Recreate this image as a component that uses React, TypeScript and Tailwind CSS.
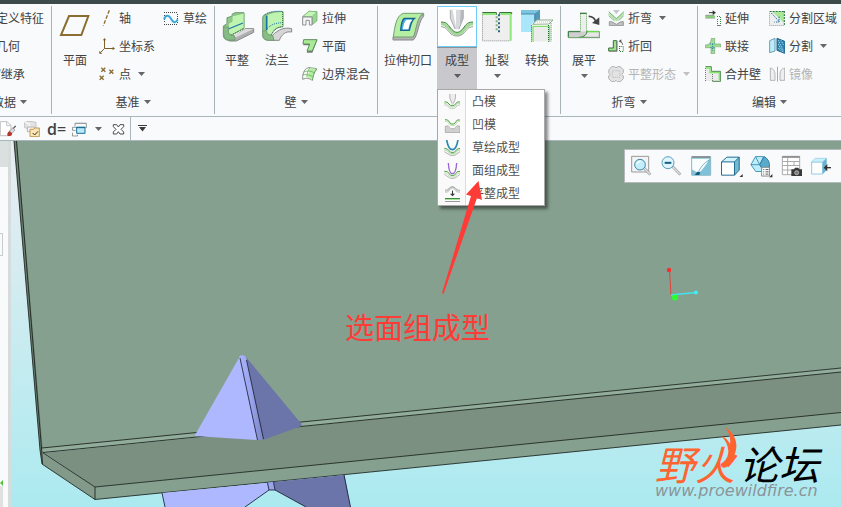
import type { ReactNode } from 'react';

type IconProps = { box: string; className?: string; children: ReactNode };

function Icon({ box, className = 'size-4', children }: IconProps) {
  return (
    <svg viewBox={box} className={`shrink-0 ${className}`} fill="none" strokeWidth={3} aria-hidden="true">
      {children}
    </svg>
  );
}

function Caret({ className = '' }: { className?: string }) {
  return (
    <svg viewBox="0 0 7 4" className={`h-1 w-[7px] shrink-0 fill-current ${className}`} aria-hidden="true">
      <path d="M0 0h7L3.5 4z" />
    </svg>
  );
}

type SmallProps = { icon?: ReactNode; label: string; caret?: boolean; disabled?: boolean };

function SmallButton({ icon, label, caret, disabled }: SmallProps) {
  return (
    <button disabled={disabled} className="flex h-7 items-center gap-1 whitespace-nowrap disabled:text-[#b4b4b4]">
      {icon}
      <span>{label}</span>
      {caret && <Caret className="ml-[3px] opacity-80" />}
    </button>
  );
}

type LargeProps = { icon: ReactNode; label: string; caret?: boolean; className?: string };

function LargeButton({ icon, label, caret, className = 'w-10' }: LargeProps) {
  return (
    <button className={`flex h-[84px] shrink-0 flex-col items-center whitespace-nowrap pt-1 ${className}`}>
      {icon}
      <span className="mt-2 leading-4">{label}</span>
      {caret && <Caret className="mt-1.5 opacity-80" />}
    </button>
  );
}

function Group({ title, className, children }: { title?: string; className: string; children: ReactNode }) {
  return (
    <section className={`flex flex-col ${className}`}>
      <div className="flex h-[84px] items-start">{children}</div>
      {title && (
        <button className="flex h-7 items-center justify-center gap-1 whitespace-nowrap">
          {title}
          <Caret className="opacity-80" />
        </button>
      )}
    </section>
  );
}

function Separator() {
  return <div className="my-0.5 w-px shrink-0 bg-[#a9b3b6]" />;
}

const planeIcon = (
  <Icon box="171 24 108 108" className="size-9">
    <path d="M207 48h58l-21 57h-61z" stroke="#8b6d31" strokeWidth={6} />
  </Icon>
);

const axisIcon = (
  <Icon box="297 30 48 48">
    <path d="M328 31l-18 46" stroke="#8b6d31" strokeWidth={4} strokeDasharray="11 5" />
  </Icon>
);

const csysIcon = (
  <Icon box="297 114 48 48">
    <path d="M313.5 118v27.5H341M313 146l-13 13" stroke="#7d5f28" strokeWidth={3} />
    <path d="M313.500 114l5 7h-10zM345 145.500l-7-5v10zM298 161v-9l9 9z" fill="#7d5f28" />
  </Icon>
);

const pointIcon = (
  <Icon box="297 198 48 48">
    <path
      d="M304 203l12 12M316 203l-12 12M328 209l12 12M340 209l-12 12M299 227l12 12M311 227l-12 12"
      stroke="#8b6d31"
      strokeWidth={4}
    />
  </Icon>
);

const sketchIcon = (
  <Icon box="489 30 48 48">
    <path
      d="M492 37.5h42M492 73.5h42M493.500 45v24M532.500 42v27"
      stroke="#444"
      strokeWidth={3}
      strokeDasharray="3 3"
    />
    <path d="M492 58c5-14 14-14 20-3s14 18 21 3" stroke="#38a7dc" strokeWidth={6} />
  </Icon>
);

const flatWallIcon = (
  <Icon box="27 24 108 108" className="size-9">
    <path d="M74 108l32-22h25v11l-52 26H58z" fill="#b0b0b0" stroke="#888" />
    <path d="M70 108l36-21h24l-52 25z" fill="#dcdcdc" />
    <path d="M40 78l11-7V53l15-4V43l9-5h27v46L66 105l9 16H58c-12 0-18-6-18-16z" fill="#8ecb8a" stroke="#6f9a6f" />
    <path d="M52 72l14-8V48l36-9v45L67 104c-9 0-12-4-12-9V73z" fill="#bff3b0" stroke="#8abf86" />
    <path d="M55 87l44-18" stroke="#1a76a8" strokeWidth={4} />
    <path d="M64 105l38-20" stroke="#286b32" strokeDasharray="3 3" />
    <path d="M41 80v22c2 13 9 17 17 18h17l-2-13c-10 0-18-3-18-13V82z" fill="#86bd83" stroke="#7a9c7c" />
  </Icon>
);

const flangeIcon = (
  <Icon box="150 24 108 108" className="size-9">
    <path d="M190 106c19-18 36-25 58-20v10c-20-3-30 8-37 25h-18z" fill="#d6d6d6" stroke="#888" />
    <path d="M161 50c12-12 34-16 61-15v45c-18 1-28 8-36 25l9 16h-16c-12 0-18-6-18-17z" fill="#8ecb8a" stroke="#7a9c7c" />
    <path d="M173 48c15-10 30-12 48-12v43c-17 0-27 7-35 25-9-2-13-5-13-12z" fill="#bff3b0" />
    <path d="M173 47v43" stroke="#1673a5" strokeWidth={5} />
    <path d="M164 47c14-13 34-14 57-13M175 85c14-14 29-16 46-17" stroke="#1673a5" strokeDasharray="3 3" />
    <path d="M221 36v43M187 104c8-14 17-22 34-24" stroke="#2c743a" strokeDasharray="3 3" />
    <path d="M161 92v12c1 11 8 17 18 17h16l-4-15c-11 0-18-4-18-14z" fill="#86bd83" stroke="#7a9c7c" />
  </Icon>
);

const extrudeIcon = (
  <Icon box="276 30 48 48">
    <path d="M278 50l19-16 24 1v27l-14 12V50z" fill="#96d98c" stroke="#6f9f6f" strokeWidth={2} />
    <path d="M278 50l19-16 24 1-15 15z" fill="#c4f6b5" stroke="#7aab7a" strokeWidth={2} />
    <path d="M278 51h28v24h-8V61h-10v14h-10z" fill="#f5f5f5" stroke="#8f8f8f" />
  </Icon>
);

const flatIcon = (
  <Icon box="276 114 48 48">
    <path d="M283 120h39l-15 38h-17l8-22h-18z" fill="#777" />
    <path d="M281 119h40l-14 34h-16l8-21h-20z" fill="#a9ea96" stroke="#5f8c5f" />
  </Icon>
);

const boundaryIcon = (
  <Icon box="276 198 48 48">
    <path d="M278 229c3-16 8-25 19-26l17 2 7 2c-9 10-12 20-14 34-9-6-18-8-29-3z" fill="#f4fff0" stroke="#909090" />
    <path d="M300 204l20 4c-9 9-11 19-13 32l-14-8z" fill="#b4ee9f" />
    <path
      d="M278 225c10-3 18-1 29 4M300 203c-7 9-9 18-9 29M281 216c14-5 23-3 33 3M320 207c-9 10-11 20-13 34"
      stroke="#579b56"
      strokeWidth={2}
    />
  </Icon>
);

const cutIcon = (
  <Icon box="45 24 108 108" className="size-9">
    <path d="M146 41v8c-14 14-16 44-25 63l-6 8H54v-9z" fill="#b4b4b4" stroke="#888" />
    <path d="M85 40h60c-20 12-20 48-30 71H55c4-28 8-64 30-71z" fill="#b6efa3" stroke="#6f9f6f" />
    <path d="M88 55h30c-10 7-11 22-15 36H77c2-16 2-30 11-36z" fill="#48aede" stroke="#17658f" strokeWidth={4} />
    <path d="M95 59h17c-8 7-9 17-12 29H83c3-12 4-23 12-29z" fill="#fff" />
  </Icon>
);

const formIcon = (
  <Icon box="192 24 108 108" className="size-9">
    <path d="M226 29h39v26l-13 33h-12l-14-33z" fill="#d7d9dc" />
    <path d="M226 30v25l14 32M265 30v25l-13 32" stroke="#8d8f92" strokeWidth={2} />
    <path d="M233 30h10v50z" fill="#fff" />
    <path d="M257 30h7v24l-9 22z" fill="#b5b8bb" />
    <path d="M198 71c19 1 21 13 30 22 7 7 12 10 18 10s12-3 18-10c9-9 11-21 30-22" stroke="#a3d996" strokeWidth={9} />
    <path d="M198 66c21 0 23 13 32 22 6 6 10 9 16 9s10-3 16-9c9-9 11-22 32-22" stroke="#397d3b" />
    <path d="M198 80c15 1 18 10 26 18 8 8 14 10 22 10s14-2 22-10c8-8 11-17 26-18" stroke="#9a9a9a" />
  </Icon>
);

const ripIcon = (
  <Icon box="312 24 108 108" className="size-9">
    <path d="M322 41h87v81h-87z" fill="#efefef" />
    <path d="M322 42h40M377 42h30v80" stroke="#8fe679" strokeWidth={6} />
    <path d="M322 37.500h42v7M374 44v-6.500h36v5" stroke="#39713b" />
    <path d="M322.500 44v78.500H406" stroke="#8b8b8b" strokeDasharray="3 3" />
    <path d="M365 49v44" stroke="#8fae7d" strokeWidth={6} strokeDasharray="6 6" />
    <path d="M372 43v56" stroke="#22698c" strokeWidth={6} strokeDasharray="6 6" />
  </Icon>
);

const convertIcon = (
  <Icon box="432 24 108 108" className="size-9">
    <path d="M438 42h41v54h-41z" fill="#a9e6fc" />
    <path d="M438 30h57l-16 12h-41z" fill="#7cc4e0" />
    <path d="M495 31v32l-16 12V43z" fill="#5198b9" />
    <path d="M479 72V43l16-13M438 42h41" stroke="#28698b" strokeWidth={2} />
    <path d="M470 73l16-14h48v66h-64z" fill="#fff" />
    <path d="M474 79h48v46h-48z" fill="#ececec" />
    <path d="M474 125V79h49v46" stroke="#82df6c" strokeWidth={4} />
    <path d="M469.500 125V75M520.500 75v50M528 70v55" stroke="#1f6c30" strokeDasharray="3 3" />
    <path d="M473 73l14-13h47l-12 12z" fill="#fff" stroke="#5a8a5a" strokeWidth={2} />
    <path d="M486 66h43" stroke="#8be576" strokeDasharray="3 3" />
  </Icon>
);

const unbendIcon = (
  <Icon box="18 24 108 108" className="size-9">
    <path d="M25 94h93v18H25z" fill="#e6e6e6" stroke="#888" />
    <path d="M25 94h55c0 10-9 17-23 18H25z" fill="#cfcfcf" />
    <path d="M61 41h18v54H61z" fill="#eee" />
    <path d="M25 112V95h36M57 112c16-1 24-8 24-20" stroke="#2f7937" />
    <path d="M61.500 41v50M79.500 41v50" stroke="#56a752" strokeDasharray="3 3" />
    <path d="M82 95h34" stroke="#67dd4a" strokeWidth={4} />
    <path d="M25 113h95" stroke="#6ea668" />
    <path d="M60 40h20" stroke="#3f7d42" strokeWidth={4} />
    <path d="M86 49c13 0 19 6 22 18" stroke="#444" strokeWidth={5} />
    <path d="M96 69l22 6V52z" fill="#444" />
  </Icon>
);

const bendIcon = (
  <Icon box="144 30 48 48">
    <path d="M159 30l10 13 10-13z" fill="#c5c8ca" />
    <path d="M146 40l23 21 23-21" stroke="#b4e6a8" strokeWidth={6} />
    <path d="M146 35l23 21 23-21M146 47l17 15M191 47l-15 15" stroke="#4a854a" strokeWidth={2} />
    <path d="M148 65h7l14 8 14-8h7v12h-42z" fill="#c0c0c0" stroke="#999" />
  </Icon>
);

const bendBackIcon = (
  <Icon box="144 114 48 48">
    <path d="M160 122h10v31h-24v-9h14z" fill="#a1e28e" stroke="#35713a" />
    <path d="M147 154h24v-32" stroke="#888" />
    <path d="M178.500 138v16.500H192M178 139.500h12v14" stroke="#2f7937" strokeDasharray="3 3" />
    <path d="M179 124c6 1 8 5 9 10" stroke="#555" />
    <path d="M176 124l8-6v10z" fill="#555" />
  </Icon>
);

const flatPatternIcon = (
  <Icon box="144 198 48 48">
    <path
      d="M147 209l8-9h9l4 4 4-4h8l10 9v9l-5 5 5 5v8l-9 9h-9l-4-4-5 4h-8l-9-9v-8l4-5-4-5z"
      fill="#e3e3e3"
      stroke="#b0b0b0"
    />
    <path d="M157 212h22v20h-22z" stroke="#b8b8b8" strokeDasharray="3 3" />
  </Icon>
);

const extendIcon = (
  <Icon box="30 30 48 48">
    <path d="M31 50h29" stroke="#7fd66b" strokeWidth={5} />
    <path d="M31 46h27M31 54h29" stroke="#4b704b" strokeWidth={2} />
    <path d="M42 38h13" stroke="#333" />
    <path d="M53 31l10 7-10 7z" fill="#333" />
    <path d="M66 49.500h12M76.500 51v24M67.500 57v18" stroke="#2f8b3a" strokeDasharray="3 3" />
    <path d="M66 76.500h12" stroke="#777" />
  </Icon>
);

const joinIcon = (
  <Icon box="30 114 48 48">
    <path
      d="M31 135c12 0 17-7 18-20h10v17h18v9H59v20H48v-18H31z"
      fill="#a0dc94"
      stroke="#72a870"
      strokeWidth={2}
    />
    <path d="M45 132h13M47 143h14M53 132v20" stroke="#1d7cac" strokeDasharray="3 3" />
    <path d="M60 142h15" stroke="#eee" />
  </Icon>
);

const mergeIcon = (
  <Icon box="30 198 48 48">
    <path d="M32 200h16v18h28v25H32z" fill="#ebebeb" />
    <path d="M31 200h18v14h28v30H52" stroke="#4b8a49" />
    <path d="M33 204h12v14h28v23" stroke="#83e569" strokeWidth={4} />
    <path d="M31.500 204v40M52.500 222v22" stroke="#777" strokeDasharray="3 3" />
  </Icon>
);

const splitAreaIcon = (
  <Icon box="222 30 48 48">
    <path d="M224 33h44v43h-44z" fill="#eee" />
    <path d="M232 35h35v34z" fill="#a9e799" />
    <path d="M224 34.500h44M268 33v43" stroke="#287334" strokeDasharray="6 3" />
    <path d="M223.500 38v38.500H268" stroke="#999" strokeDasharray="3 3" />
    <path d="M229 39l25 27M252 50v16h-14" stroke="#1b6a98" strokeDasharray="4 3" />
  </Icon>
);

const splitIcon = (
  <Icon box="222 114 48 48">
    <path d="M224 122l16-7v38l-16 5z" fill="#bdecfb" stroke="#6c9eae" />
    <path d="M246 115l23 9v36l-23-9z" fill="#2e83b1" stroke="#1c668d" />
    <path d="M250 121l16 33M258 121l8 15M250 133l14 24M250 144l8 10" stroke="#bdecfb" strokeDasharray="3 3" />
  </Icon>
);

const mirrorIcon = (
  <Icon box="222 198 48 48">
    <path d="M226 204c12 3 14 12 14 22v15h-14zM269 204c-12 3-14 12-14 22v15h14z" fill="#eee" stroke="#b5b5b5" />
    <path d="M247.500 200v45" stroke="#aaa" />
  </Icon>
);

const punchIcon = (
  <Icon box="42 24 48 48">
    <path d="M58 24h19v12l-6 17h-6l-7-17z" fill="#ececec" />
    <path d="M59.500 24v12l7 17M76.500 24v12l-6 17" stroke="#999" strokeWidth={2} />
    <path d="M43 48h8l10 10h12l9-10h8" stroke="#519c47" />
    <path d="M43 52h7l10 10h14l9-10h7" stroke="#b2e2a7" />
    <path d="M43 57h6l11 10h14l10-10h6" stroke="#aaa" strokeWidth={2} />
  </Icon>
);

const dieIcon = (
  <Icon box="42 93 48 48">
    <path d="M46 121l10-2 7 9h10l7-9 10 2v19H46z" fill="#d0d0d0" stroke="#999" strokeWidth={2} />
    <path d="M45 101l8 1 10 12h9l10-12h8" stroke="#519c47" />
    <path d="M45 106h6l11 12h12l11-12h5" stroke="#b0e3a2" />
    <path d="M44 112h5l11 12h15l10-12h5" stroke="#fff" strokeWidth={2} />
  </Icon>
);

const sketchFormIcon = (
  <Icon box="42 162 48 48">
    <path d="M50 162c3 16 9 29 17 29s14-13 17-29" stroke="#2589b2" strokeWidth={5} />
    <path d="M43 187l9 2 10 10h11l9-10 8-2" stroke="#519c47" />
    <path d="M43 192l7 1 11 10h13l10-10 6-1" stroke="#9bd48e" />
    <path d="M43 197l18 11h13l16-11" stroke="#8b8b8b" strokeWidth={2} />
  </Icon>
);

const quiltFormIcon = (
  <Icon box="42 231 48 48">
    <path d="M55 231c1 19 5 32 12 32s12-13 13-32" stroke="#9966d3" strokeWidth={4} />
    <path d="M43 256l9 1 10 11h11l9-11 8-1" stroke="#519c47" />
    <path d="M43 261l7 1 11 11h13l10-11 6-1" stroke="#b2e2a7" />
    <path d="M43 265l18 12h13l16-12" stroke="#999" strokeWidth={2} />
  </Icon>
);

const flattenFormIcon = (
  <Icon box="42 300 48 48">
    <path d="M45 318h5c7-1 8-13 17-13s11 12 18 13h5" stroke="#ccc" strokeWidth={5} />
    <path d="M45 313c13 0 12-11 22-11s9 11 23 11" stroke="#6c7c6c" strokeWidth={2} />
    <path d="M67.500 314v11" stroke="#333" />
    <path d="M60 323h15l-7.500 8z" fill="#333" />
    <path d="M45 337.500h45" stroke="#3f8a3e" />
    <path d="M45 340.500h45" stroke="#a8e19c" />
    <path d="M45 346.500h45" stroke="#999" />
  </Icon>
);

const menuItems = [
  { label: '凸模', icon: punchIcon },
  { label: '凹模', icon: dieIcon },
  { label: '草绘成型', icon: sketchFormIcon },
  { label: '面组成型', icon: quiltFormIcon },
  { label: '平整成型', icon: flattenFormIcon },
];

function FormMenu() {
  return (
    <div
      role="menu"
      className="absolute left-0 top-[83px] z-10 w-[108px] border border-[#a8a8a8] bg-white shadow-[3px_3px_3px_rgba(0,0,0,0.45)]"
    >
      {menuItems.map(item => (
        <button key={item.label} role="menuitem" className="flex h-[23px] w-full items-center text-[#505050]">
          <span className="flex h-full w-7 items-center justify-center border-r border-[#dcdcdc] bg-[#fafafa]">
            {item.icon}
          </span>
          <span className="pb-0.5 pl-1.5">{item.label}</span>
        </button>
      ))}
    </div>
  );
}

function Ribbon() {
  return (
    <div className="flex border-b border-[#a9b7bb] bg-[#f8fafc]">
      <section className="flex w-[51px] shrink-0 flex-col items-start overflow-hidden">
        <div className="-ml-1">
          <SmallButton label="定义特征" />
          <SmallButton label="几何" />
          <SmallButton label="/继承" />
        </div>
        <button className="-ml-2 flex h-7 items-center gap-1 whitespace-nowrap">
          数据
          <Caret className="opacity-80" />
        </button>
      </section>
      <Separator />
      <Group title="基准" className="w-[162px] shrink-0">
        <LargeButton icon={planeIcon} label="平面" className="w-[46px]" />
        <div className="ml-px">
          <SmallButton icon={axisIcon} label="轴" />
          <SmallButton icon={csysIcon} label="坐标系" />
          <SmallButton icon={pointIcon} label="点" caret />
        </div>
        <div className="ml-2">
          <SmallButton icon={sketchIcon} label="草绘" />
        </div>
      </Group>
      <Separator />
      <Group title="壁" className="w-[162px] shrink-0 [&>div]:pl-0.5">
        <LargeButton icon={flatWallIcon} label="平整" />
        <LargeButton icon={flangeIcon} label="法兰" />
        <div className="ml-[5px]">
          <SmallButton icon={extrudeIcon} label="拉伸" />
          <SmallButton icon={flatIcon} label="平面" />
          <SmallButton icon={boundaryIcon} label="边界混合" />
        </div>
      </Group>
      <Separator />
      <Group className="w-[182px] shrink-0 [&>div]:pl-[3px]">
        <LargeButton icon={cutIcon} label="拉伸切口" className="mr-0.5 w-[54px]" />
        <div className="relative mt-0.5 w-10 shrink-0">
          <button
            aria-label="成型工具"
            className="flex h-[41px] w-full justify-center border border-[#6ccdf8] bg-white pt-px"
          >
            {formIcon}
          </button>
          <button
            aria-haspopup="menu"
            aria-expanded="true"
            className="flex h-[42px] w-full flex-col items-center border-t border-[#909094] bg-[#c8c8cd] pt-1"
          >
            <span className="leading-4">成型</span>
            <Caret className="mt-1.5 opacity-80" />
          </button>
          <FormMenu />
        </div>
        <LargeButton icon={ripIcon} label="扯裂" caret />
        <LargeButton icon={convertIcon} label="转换" />
      </Group>
      <Separator />
      <Group title="折弯" className="w-[136px] shrink-0 [&>div]:pl-[3px]">
        <LargeButton icon={unbendIcon} label="展平" caret />
        <div className="ml-1">
          <SmallButton icon={bendIcon} label="折弯" caret />
          <SmallButton icon={bendBackIcon} label="折回" />
          <SmallButton icon={flatPatternIcon} label="平整形态" caret disabled />
        </div>
      </Group>
      <Separator />
      <Group title="编辑" className="flex-1 [&>div]:pl-[7px]">
        <div>
          <SmallButton icon={extendIcon} label="延伸" />
          <SmallButton icon={joinIcon} label="联接" />
          <SmallButton icon={mergeIcon} label="合并壁" />
        </div>
        <div className="ml-2">
          <SmallButton icon={splitAreaIcon} label="分割区域" />
          <SmallButton icon={splitIcon} label="分割" caret />
          <SmallButton icon={mirrorIcon} label="镜像" disabled />
        </div>
      </Group>
    </div>
  );
}

function QuickBar() {
  return (
    <div className="flex h-6 items-center border-b border-[#a9b7bb] bg-[#f8fafc]">
      <button aria-label="擦除">
        <Icon box="0 18 48 48">
          <path d="M1 20h20l12 11v31H1z" fill="#fff" stroke="#c2c2c2" />
          <path d="M20 20v12h13" stroke="#c2c2c2" />
          <path d="M47 33L31 50" stroke="#555" strokeWidth={4} />
          <path d="M38 39l7 6-9 10-8-7z" fill="#ddd" stroke="#888" strokeWidth={2} />
          <path d="M28 48l9 8c-3 7-9 8-13 7-4-2-3-10 4-15z" fill="#b3332b" />
        </Icon>
      </button>
      <button aria-label="再生" className="ml-2">
        <Icon box="72 18 48 48">
          <path d="M74 22l14-3 20 3v20H90l-16-4z" fill="#e4e4e4" stroke="#c4c4c4" />
          <path d="M75 22l13 4v16" stroke="#fff" />
          <path d="M82 36h22v14H82z" fill="#f3f3f3" stroke="#b4b4b4" />
          <path d="M90 43h11l3-4h14v26H90z" fill="#fde6b4" stroke="#c09a55" />
          <path d="M98 54l6 6 10-11" stroke="#333" />
        </Icon>
      </button>
      <button
        aria-label="切换尺寸"
        className="ml-[7px] w-[17px] font-['Open_Sans',sans-serif] text-base font-semibold leading-4"
      >
        d=
      </button>
      <button aria-label="窗口" className="ml-2 flex items-center gap-[7px]">
        <Icon box="216 18 48 48">
          <path d="M225 34v-9h34v14M217 37h11M217.500 37v9h9M217.500 53v10h15v-4M225 25h34" stroke="#999" />
          <path d="M230 37h25v18h-25z" fill="#b9e9fa" stroke="#1d6f96" />
          <path d="M229 37.500h27" stroke="#1d6f96" strokeWidth={4} />
        </Icon>
        <Caret className="opacity-80" />
      </button>
      <button aria-label="关闭" className="ml-2.5">
        <Icon box="336 18 48 48">
          <path
            d="M340 29h10l5 7 5-7h11v6l-8 8 8 8v6h-11l-5-7-5 7h-10v-6l8-8-8-8z"
            fill="#fff"
            stroke="#4b4b4b"
          />
        </Icon>
      </button>
      <div className="ml-0.5 h-full w-px bg-[#a9b7bb]" />
      <button aria-label="自定义快速访问工具栏" className="ml-[7px]">
        <svg viewBox="0 0 9 7" className="h-[7px] w-[9px] fill-[#3b3b3b]" aria-hidden="true">
          <path d="M0 0h9v1H0zM1 2h7L4.5 6.5z" />
        </svg>
      </button>
    </div>
  );
}

function ViewToolbar() {
  return (
    <div className="absolute right-0 top-2 flex gap-1.5 border border-r-0 border-[#b4b8b8] bg-[#f8fafc] py-1 pl-1 pr-2">
      <button aria-label="重新调整">
        <Icon box="30 42 72 72" className="size-6">
          <path d="M38 49h51v47H38z" fill="#f4f4f4" stroke="#999" />
          <path d="M75 84l19 20" stroke="#999" strokeWidth={8} />
          <path d="M75 84l18 19" stroke="#e2e2e2" strokeWidth={4} />
          <circle cx="63" cy="74" r="16" fill="#c5eefb" stroke="#3a87a9" />
          <path d="M54 72c2-6 6-8 11-8" stroke="#fff" strokeWidth={4} />
        </Icon>
      </button>
      <button aria-label="缩小">
        <Icon box="120 42 72 72" className="size-6">
          <path d="M161 80l23 24" stroke="#999" strokeWidth={8} />
          <path d="M161 80l22 23" stroke="#e2e2e2" strokeWidth={4} />
          <circle cx="147" cy="68" r="18" fill="#dff6fd" stroke="#5c9fbd" />
          <path d="M137 68.500h20" stroke="#155f87" strokeWidth={6} />
        </Icon>
      </button>
      <button aria-label="重画">
        <Icon box="210 42 72 72" className="size-6">
          <path d="M218 49h57v58h-57z" fill="#7fc1d8" />
          <path d="M218 56h53c-8 18-20 31-32 44l-21-12z" fill="#fafdfe" />
          <path d="M218 51h57" stroke="#888" strokeWidth={5} />
          <path d="M218 49v56h57V51" stroke="#8fb9c8" />
          <path d="M271 60c-16 8-28 22-34 40" stroke="#4790aa" strokeWidth={2} />
          <path d="M227 105l8-10 9 2-3 8z" fill="#125b80" />
        </Icon>
      </button>
      <button aria-label="显示样式">
        <Icon box="300 42 76 72" className="size-6">
          <path d="M308 65h41v42h-41z" fill="#fff" />
          <path d="M308 65l17-15h39l-15 15z" fill="#d4f4fd" />
          <path d="M349 65l15-15v41l-15 16z" fill="#73bad1" />
          <path d="M308 65h41v42h-41zM308 65l17-15h39l-15 15M364 50v41l-15 16" stroke="#17658b" />
          <path d="M375 103v10h-10z" fill="#333" />
        </Icon>
      </button>
      <button aria-label="已命名视图">
        <Icon box="396 42 74 72" className="size-6">
          <path d="M402 74l14-25h25l-12 25 12 21h-24z" fill="#bdeefb" stroke="#4794b4" />
          <path d="M402 74h27M416 49l13 25" stroke="#4794b4" />
          <path d="M429 74l14-25c10 6 16 15 16 25v17h-18z" fill="#5aabc9" stroke="#2f7d9d" />
          <path d="M435 82h24v27h-24z" fill="#fff" stroke="#888" />
          <path d="M440 89h3M447 89h9M440 96h3M447 96h9M440 103h3M447 103h9" stroke="#555" />
          <path d="M468 103v10h-10z" fill="#333" />
        </Icon>
      </button>
      <button aria-label="视图管理器">
        <Icon box="483 42 72 72" className="size-6">
          <path d="M493 49h52v55h-52z" fill="#fff" stroke="#aaa" />
          <path d="M493 51h52" stroke="#888" strokeWidth={5} />
          <path d="M493 64.500h52M493 76.500h52M493 90h52M509 52v52M528 65v12" stroke="#aaa" />
          <path d="M520 88h8l3-5h10l3 5h8v20h-32z" fill="#3a3a3a" />
          <circle cx="536" cy="98" r="6" fill="#777" stroke="#ddd" strokeWidth={2} />
        </Icon>
      </button>
      <button aria-label="透视图">
        <Icon box="576 42 72 72" className="size-6">
          <path d="M584 66h33v36h-33z" fill="#fff" stroke="#8fcbe4" />
          <path d="M583 66l12-11h34l-13 11z" fill="#c8effb" stroke="#8fcbe4" strokeWidth={2} />
          <path d="M617 66l12-11v36l-12 11z" fill="#66b4d2" />
          <path d="M628 83h14" stroke="#333" strokeWidth={4} />
          <path d="M620 83l11-11v22z" fill="#333" />
        </Icon>
      </button>
    </div>
  );
}

function Model() {
  return (
    <svg
      viewBox="11 141 830 366"
      preserveAspectRatio="xMinYMin slice"
      className="absolute inset-0 h-full w-full"
      aria-hidden="true"
    >
      <defs>
        <linearGradient id="ridge" x1="0" x2="1" y1="0" y2="0">
          <stop offset="0" stopColor="#a9b4fb" />
          <stop offset="0.5" stopColor="#98a4ec" />
          <stop offset="1" stopColor="#7b86c4" />
        </linearGradient>
      </defs>
      {/* sheet metal wall, bend and lower plate */}
      <path d="M14 141H841V368L42 449z" fill="#86a08f" />
      <path d="M14 141h3l26 311-1 11-2-13z" fill="#6b8173" />
      <path d="M42 448L841 368v5L43 453z" fill="#93ad9c" />
      <path d="M43 453L841 372v41L95 487z" fill="#7b9080" />
      <path d="M95 487L841 412.5v12.5L95 499.5z" fill="#86a08f" />
      <path d="M42 453l53 34v12.5L42 464z" fill="#83998a" />
      <path
        d="M14 141l26 309 2 14 53 35.5L841 425M16.5 141l25 307 1 16M42 448L841 368M43 452.5L841 372M43 453l52 34L841 412.5M95 487v12.5"
        fill="none"
        stroke="#1a211c"
        strokeOpacity={0.85}
        strokeWidth={1}
      />
      {/* upper pyramid */}
      <path d="M239.5 357L194.500 436l63 4z" fill="#adb8ff" />
      <path d="M246 357l55.500 67v2L263 440z" fill="#6c75a9" />
      <path d="M239 357q3-4 7 0l17 82.5-5.5.5z" fill="url(#ridge)" />
      <path
        d="M240 358l17.5 82M246.5 360l17 79"
        stroke="#1b1d33"
        strokeOpacity={0.8}
        strokeWidth={1}
      />
      {/* lower part seen under the plate */}
      <path d="M162 493l105-10 2 7-24 17h-80z" fill="#adb8ff" />
      <path d="M273.5 482l71-7 6 32H306l-31-17z" fill="#6c75a9" />
      <path d="M267 483l6.5-1 1.5 8h-6z" fill="#98a4ec" />
      <path
        d="M162 493l3 14M267.5 483l1.5 7-24 17M273.5 482l1.5 8 31 17M344 475l6.5 32M269 490h6"
        fill="none"
        stroke="#1b1d33"
        strokeOpacity={0.85}
        strokeWidth={1}
      />
      {/* orientation triad */}
      <path d="M669.5 270l1.5 25" stroke="#e8403c" strokeWidth={1} />
      <path d="M671 295l25-2.5" stroke="#3ee6ee" strokeWidth={1.5} />
      <circle cx="669" cy="270" r="2.2" fill="#ff2a2a" />
      <circle cx="696" cy="292.5" r="2" fill="#3ef0f5" />
      <circle cx="675" cy="297.5" r="3" fill="#2bff2b" />
    </svg>
  );
}

function Watermark() {
  return (
    <div className="absolute bottom-2 right-[22px] whitespace-nowrap italic">
      <div className="relative flex gap-1 text-[40px] leading-10">
        <span className="text-[#ff6430]">野火</span>
        <span className="text-black">论坛</span>
        <svg viewBox="0 0 54 124" className="absolute -top-4 left-[64px] h-[41px] w-[18px]" aria-hidden="true">
          <path
            d="M18 0c28 18 40 46 32 74-5 18-16 38-29 48-8 4-17-2-16-10 16-10 23-22 23-40-1-17-8-32-21-44 12 3 20 11 26 24 3-18-3-36-15-52z"
            fill="#ff6430"
          />
        </svg>
      </div>
      <div className="font-['DejaVu_Sans',sans-serif] text-base leading-4 text-[#8b9499]">www.proewildfire.cn</div>
    </div>
  );
}

function SidePanel() {
  return (
    <div className="flex w-[11px] shrink-0 flex-col border-r-[3px] border-[#d6dbdc] bg-[#f8fafb]">
      <div className="h-[26px] bg-[#dadfe0]" />
      <div className="mt-[66px] h-[23px] w-[3px] border border-l-0 border-[#c9cdce]" />
      <div className="mt-auto">
        <svg viewBox="0 0 3 6" className="h-1.5 w-[3px] fill-[#55c43a]" aria-hidden="true">
          <path d="M3 0v6L0 3z" />
        </svg>
        <div className="h-[21px] w-[3px] bg-[#e0e0e0]" />
      </div>
    </div>
  );
}

export default function App() {
  return (
    <div className="relative flex h-screen flex-col overflow-hidden font-['Noto_Sans_CJK_SC',sans-serif] text-xs text-[#404244]">
      <div className="h-1 shrink-0 bg-[#3c4a49]" />
      <Ribbon />
      <QuickBar />
      <main className="flex flex-1">
        <SidePanel />
        <div className="relative flex-1 overflow-hidden bg-linear-to-b from-[#e9edf2] via-[#cbecf0] to-[#abeaf0]">
          <Model />
          <ViewToolbar />
          <p className="absolute left-[334px] top-[167px] whitespace-nowrap text-[29px] leading-9 text-[#ff3b37]">
            选面组成型
          </p>
          <Watermark />
        </div>
      </main>
      {/* callout arrow pointing at the menu entry */}
      <svg
        viewBox="442 181 40 113"
        className="pointer-events-none absolute left-[442px] top-[181px] z-20 h-[113px] w-10"
        aria-hidden="true"
      >
        <path d="M478.5 181L466 194.5l5 1.5-29 97 1.5 1L477 198l5 2z" fill="#ff3b37" />
      </svg>
    </div>
  );
}
